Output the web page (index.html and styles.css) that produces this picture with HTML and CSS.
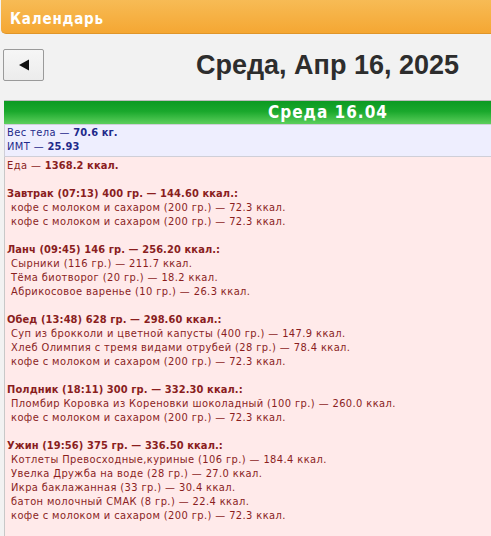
FILE: index.html
```html
<!DOCTYPE html>
<html lang="ru">
<head>
<meta charset="utf-8">
<title>Календарь</title>
<link rel="stylesheet" href="styles.css">
</head>
<body>
<div class="app">
  <header class="topbar">Календарь</header>
  <div class="toolbar">
    <button class="nav-btn" type="button" aria-label="Назад">
      <svg width="12" height="12" viewBox="0 0 12 12"><path d="M1 6 L11 0.5 L11 11.5 Z" fill="#111"/></svg>
    </button>
    <h1 class="date-title">Среда, Апр 16, 2025</h1>
    <span></span>
  </div>
  <section class="day">
    <div class="day-head">Среда 16.04</div>
    <div class="weight">
      <div>Вес тела — <b>70.6 кг.</b></div>
      <div>ИМТ — <b>25.93</b></div>
    </div>
    <div class="food">
      <div>Еда — <b>1368.2 ккал.</b></div>
      <div class="gap"></div>
      <div class="meal">Завтрак (07:13) 400 гр. — 144.60 ккал.:</div>
      <div class="item">кофе с молоком и сахаром (200 гр.) — 72.3 ккал.</div>
      <div class="item">кофе с молоком и сахаром (200 гр.) — 72.3 ккал.</div>
      <div class="gap"></div>
      <div class="meal">Ланч (09:45) 146 гр. — 256.20 ккал.:</div>
      <div class="item">Сырники (116 гр.) — 211.7 ккал.</div>
      <div class="item">Тёма биотворог (20 гр.) — 18.2 ккал.</div>
      <div class="item">Абрикосовое варенье (10 гр.) — 26.3 ккал.</div>
      <div class="gap"></div>
      <div class="meal">Обед (13:48) 628 гр. — 298.60 ккал.:</div>
      <div class="item">Суп из брокколи и цветной капусты (400 гр.) — 147.9 ккал.</div>
      <div class="item">Хлеб Олимпия с тремя видами отрубей (28 гр.) — 78.4 ккал.</div>
      <div class="item">кофе с молоком и сахаром (200 гр.) — 72.3 ккал.</div>
      <div class="gap"></div>
      <div class="meal">Полдник (18:11) 300 гр. — 332.30 ккал.:</div>
      <div class="item">Пломбир Коровка из Кореновки шоколадный (100 гр.) — 260.0 ккал.</div>
      <div class="item">кофе с молоком и сахаром (200 гр.) — 72.3 ккал.</div>
      <div class="gap"></div>
      <div class="meal">Ужин (19:56) 375 гр. — 336.50 ккал.:</div>
      <div class="item">Котлеты Превосходные,куриные (106 гр.) — 184.4 ккал.</div>
      <div class="item">Увелка Дружба на воде (28 гр.) — 27.0 ккал.</div>
      <div class="item">Икра баклажанная (33 гр.) — 30.4 ккал.</div>
      <div class="item">батон молочный СМАК (8 гр.) — 22.4 ккал.</div>
      <div class="item">кофе с молоком и сахаром (200 гр.) — 72.3 ккал.</div>
      <div class="gap"></div>
      <div class="gap"></div>
    </div>
  </section>
</div>
</body>
</html>
```
FILE: styles.css
```css
html, body {
  margin: 0;
  padding: 0;
}
body {
  background: #f2f2f2;
  overflow: hidden;
  font-family: "DejaVu Sans", Verdana, sans-serif;
  font-stretch: condensed;
}
.app {
  width: 652px;
}
.topbar {
  margin-left: 1px;
  height: 34px;
  box-sizing: border-box;
  padding: 10px 0 0 9px;
  background: linear-gradient(#f7bb55, #f5a733);
  border-bottom: 1px solid #e0962a;
  border-radius: 0 0 0 5px;
  color: #fff;
  font-weight: bold;
  font-size: 15px;
  letter-spacing: 0.8px;
  line-height: 18px;
}
.toolbar {
  display: grid;
  grid-template-columns: 44px 1fr 44px;
  align-items: center;
  margin: 15px 0 0 3px;
  height: 32px;
}
.nav-btn {
  width: 41px;
  height: 32px;
  margin: 0;
  padding: 0;
  display: flex;
  align-items: center;
  justify-content: center;
  background: linear-gradient(#f6f6f6, #ececec);
  border: 1px solid #9a9a9a;
  border-radius: 2px;
}
.date-title {
  margin: 0;
  text-align: center;
  font-family: "Liberation Sans", Arial, sans-serif;
  font-stretch: normal;
  font-size: 27px;
  font-weight: bold;
  color: #2d2d2d;
  line-height: 32px;
}
.day {
  margin: 19px 0 0 4px;
  width: 648px;
}
.day-head {
  height: 24px;
  box-sizing: border-box;
  border-top: 1px solid #bdbdbd;
  background: linear-gradient(#0c9a22 0%, #1aa82c 45%, #5ccf5c 100%);
  color: #fff;
  text-align: center;
  font-weight: bold;
  font-size: 17px;
  letter-spacing: 1px;
  line-height: 22px;
}
.weight {
  background: #eeeefe;
  border: 1px solid #cfcfd8;
  padding: 1px 2px 2px;
  color: #1f2a8a;
  font-size: 11px;
  letter-spacing: 0.4px;
  line-height: 14px;
}
.food {
  background: #ffeaea;
  border-left: 1px solid #c8c8c8;
  padding: 2px 2px 0;
  color: #8a1e1e;
  font-size: 11px;
  letter-spacing: 0.4px;
  line-height: 14px;
}
.weight b, .food b, .meal {
  letter-spacing: 0.1px;
}
.meal {
  font-weight: bold;
}
.item {
  padding-left: 4px;
}
.gap {
  height: 14px;
}
```
